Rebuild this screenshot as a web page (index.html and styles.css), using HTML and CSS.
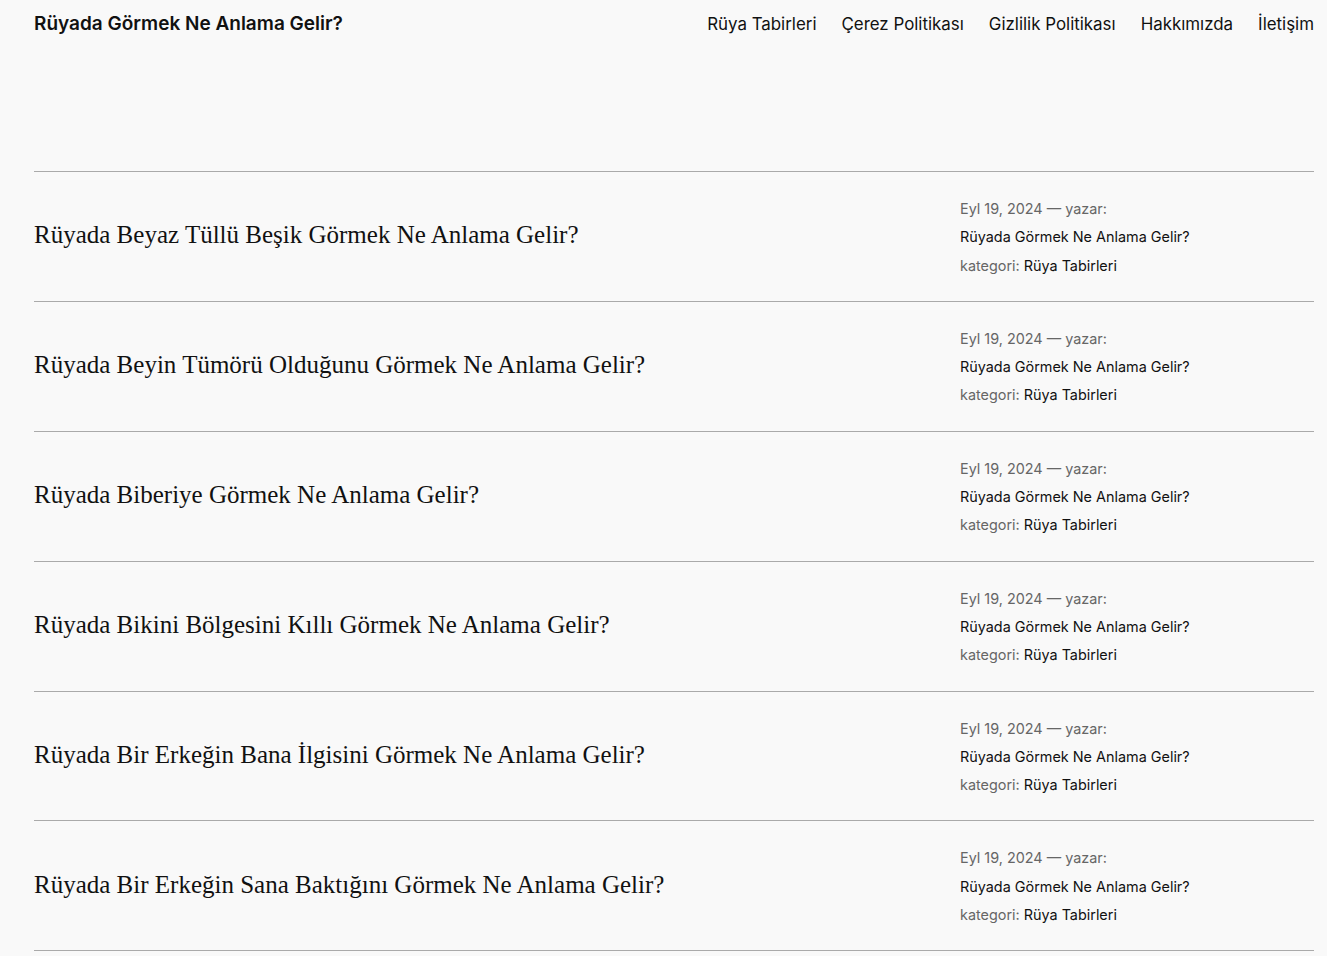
FILE: index.html
```html
<!DOCTYPE html>
<html lang="tr">
<head>
<meta charset="utf-8">
<title>Rüyada Görmek Ne Anlama Gelir?</title>
<link rel="stylesheet" href="styles.css">
</head>
<body>
<header class="site-header">
  <a class="site-title" href="#">Rüyada Görmek Ne Anlama Gelir?</a>
  <nav class="site-nav">
    <a href="#">Rüya Tabirleri</a>
    <a href="#">Çerez Politikası</a>
    <a href="#">Gizlilik Politikası</a>
    <a href="#">Hakkımızda</a>
    <a href="#">İletişim</a>
  </nav>
</header>
<main class="posts">
  <article class="post">
    <h2 class="post-title">Rüyada Beyaz Tüllü Beşik Görmek Ne Anlama Gelir?</h2>
    <div class="post-meta">
      <div class="meta-line muted">Eyl 19, 2024 — yazar:</div>
      <div class="meta-line">Rüyada Görmek Ne Anlama Gelir?</div>
      <div class="meta-line"><span class="muted">kategori: </span>Rüya Tabirleri</div>
    </div>
  </article>
  <article class="post">
    <h2 class="post-title">Rüyada Beyin Tümörü Olduğunu Görmek Ne Anlama Gelir?</h2>
    <div class="post-meta">
      <div class="meta-line muted">Eyl 19, 2024 — yazar:</div>
      <div class="meta-line">Rüyada Görmek Ne Anlama Gelir?</div>
      <div class="meta-line"><span class="muted">kategori: </span>Rüya Tabirleri</div>
    </div>
  </article>
  <article class="post">
    <h2 class="post-title">Rüyada Biberiye Görmek Ne Anlama Gelir?</h2>
    <div class="post-meta">
      <div class="meta-line muted">Eyl 19, 2024 — yazar:</div>
      <div class="meta-line">Rüyada Görmek Ne Anlama Gelir?</div>
      <div class="meta-line"><span class="muted">kategori: </span>Rüya Tabirleri</div>
    </div>
  </article>
  <article class="post">
    <h2 class="post-title">Rüyada Bikini Bölgesini Kıllı Görmek Ne Anlama Gelir?</h2>
    <div class="post-meta">
      <div class="meta-line muted">Eyl 19, 2024 — yazar:</div>
      <div class="meta-line">Rüyada Görmek Ne Anlama Gelir?</div>
      <div class="meta-line"><span class="muted">kategori: </span>Rüya Tabirleri</div>
    </div>
  </article>
  <article class="post">
    <h2 class="post-title">Rüyada Bir Erkeğin Bana İlgisini Görmek Ne Anlama Gelir?</h2>
    <div class="post-meta">
      <div class="meta-line muted">Eyl 19, 2024 — yazar:</div>
      <div class="meta-line">Rüyada Görmek Ne Anlama Gelir?</div>
      <div class="meta-line"><span class="muted">kategori: </span>Rüya Tabirleri</div>
    </div>
  </article>
  <article class="post">
    <h2 class="post-title">Rüyada Bir Erkeğin Sana Baktığını Görmek Ne Anlama Gelir?</h2>
    <div class="post-meta">
      <div class="meta-line muted">Eyl 19, 2024 — yazar:</div>
      <div class="meta-line">Rüyada Görmek Ne Anlama Gelir?</div>
      <div class="meta-line"><span class="muted">kategori: </span>Rüya Tabirleri</div>
    </div>
  </article>
</main>
</body>
</html>
```
FILE: styles.css
```css
html, body {
  margin: 0;
  padding: 0;
}
body {
  background: #f9f9f9;
  color: #111111;
  font-family: Inter, "Liberation Sans", sans-serif;
  padding: 0 13px 0 34px;
}
a {
  color: inherit;
  text-decoration: none;
}
.site-header {
  display: flex;
  justify-content: space-between;
  align-items: flex-start;
  padding-top: 10px;
  height: 171px;
  box-sizing: border-box;
}
.site-title {
  font-size: 19px;
  font-weight: 600;
  line-height: 28px;
}
.site-nav {
  display: flex;
  gap: 25px;
  font-size: 16.9px;
  line-height: 28px;
}
.posts {
  border-bottom: 1px solid #aaaaaa;
}
.post {
  display: grid;
  grid-template-columns: 1fr 354px;
  align-items: center;
  border-top: 1px solid #aaaaaa;
  padding: 23px 0 21px;
}
.post-title {
  margin: 0;
  padding-bottom: 4px;
  font-family: "Liberation Serif", serif;
  font-weight: 400;
  font-size: 25px;
  line-height: 1.2;
  color: #111111;
}
.post-meta {
  display: flex;
  flex-direction: column;
  font-size: 14.4px;
  line-height: 28.3px;
}
.meta-line {
  white-space: nowrap;
}
.muted {
  color: #666666;
}
```
